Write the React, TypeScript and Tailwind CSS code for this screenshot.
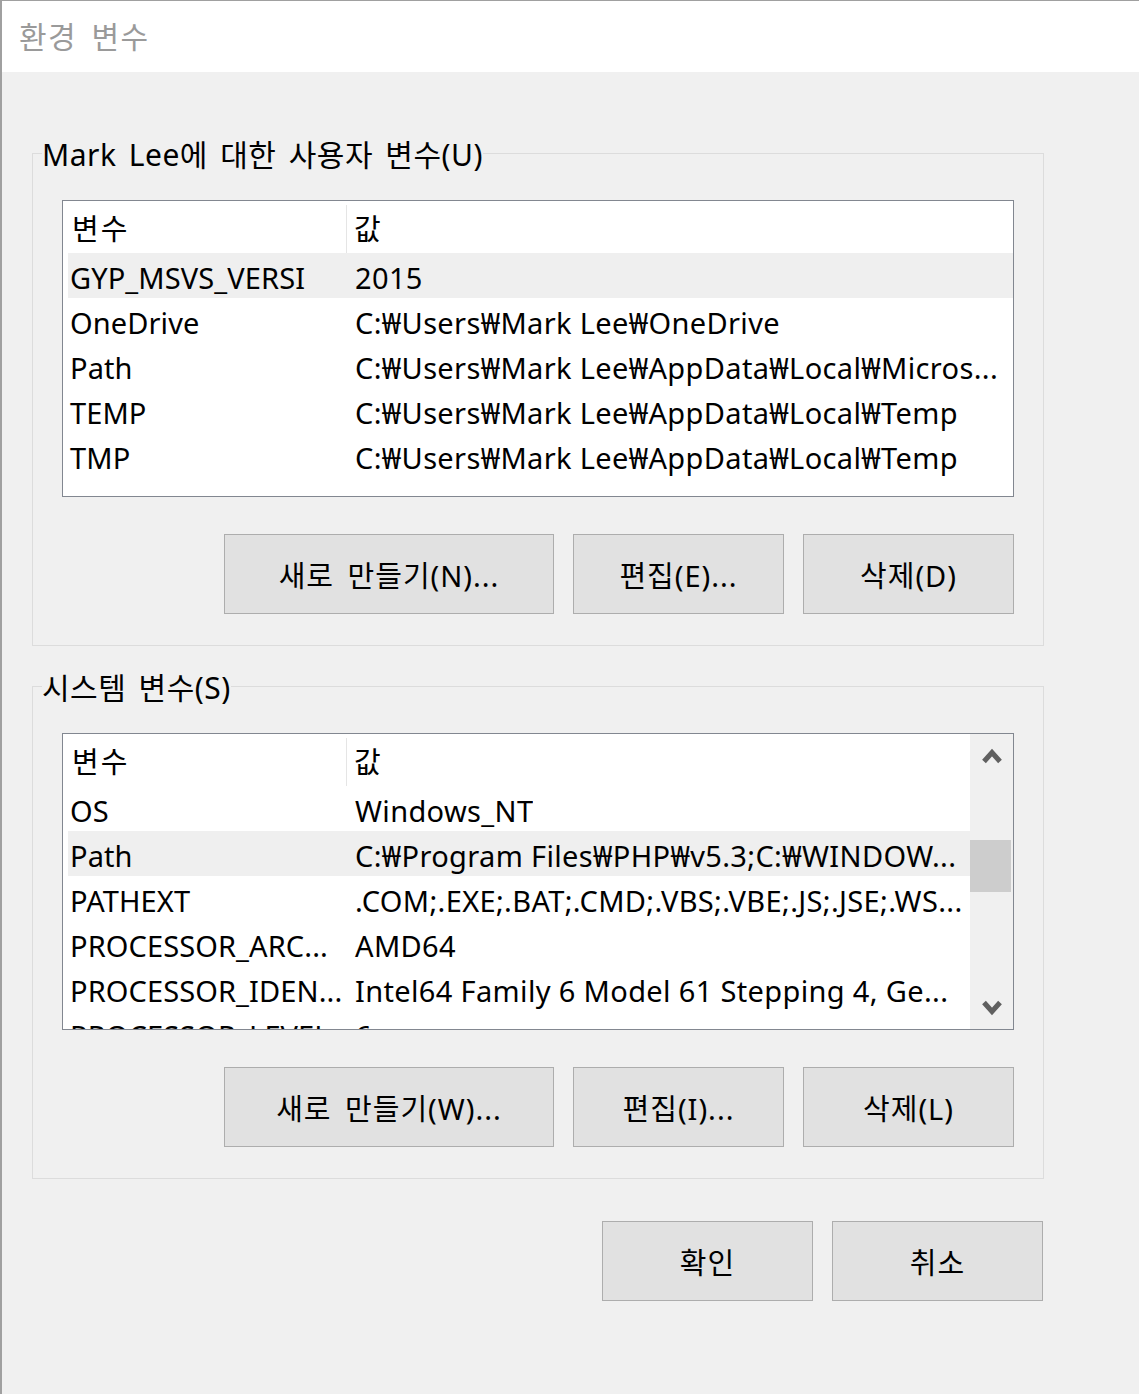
import React from 'react';

type Row = { name: string; value: string };

const userRows: Row[] = [
  { name: 'GYP_MSVS_VERSI', value: '2015' },
  { name: 'OneDrive', value: 'C:₩Users₩Mark Lee₩OneDrive' },
  { name: 'Path', value: 'C:₩Users₩Mark Lee₩AppData₩Local₩Micros...' },
  { name: 'TEMP', value: 'C:₩Users₩Mark Lee₩AppData₩Local₩Temp' },
  { name: 'TMP', value: 'C:₩Users₩Mark Lee₩AppData₩Local₩Temp' },
];

const systemRows: Row[] = [
  { name: 'OS', value: 'Windows_NT' },
  { name: 'Path', value: 'C:₩Program Files₩PHP₩v5.3;C:₩WINDOW...' },
  { name: 'PATHEXT', value: '.COM;.EXE;.BAT;.CMD;.VBS;.VBE;.JS;.JSE;.WS...' },
  { name: 'PROCESSOR_ARC...', value: 'AMD64' },
  { name: 'PROCESSOR_IDEN...', value: 'Intel64 Family 6 Model 61 Stepping 4, Ge...' },
  { name: 'PROCESSOR_LEVEL', value: '6' },
];

function Chevron({ down }: { down?: boolean }) {
  return (
    <svg width="20" height="18" viewBox="0 0 20 18" className={down ? 'rotate-180' : ''}>
      <polyline points="2,14.5 10,5.5 18,14.5" fill="none" stroke="#606060" strokeWidth="5" strokeLinejoin="miter" />
    </svg>
  );
}

function VarList({ rows, selected, scroll }: { rows: Row[]; selected: number; scroll?: boolean }) {
  return (
    <div className="flex h-[297px] w-[952px] overflow-hidden border border-[#828790] bg-white">
      <div className="flex min-w-0 flex-1 flex-col">
        {/* header */}
        <div className="flex h-[52px] shrink-0 items-center pt-[4px] text-[29px] tracking-[2px]">
          <div className="flex h-full w-[284px] items-center border-r border-[#e5e5e5] pl-[9px]">변수</div>
          <div className="flex h-full flex-1 items-center pl-[7px]">값</div>
        </div>
        {rows.map((r, i) => (
          <div
            key={r.name}
            className={`ml-[5px] flex h-[45px] shrink-0 items-center whitespace-nowrap pt-[4px] text-[29px] leading-[40px] ${
              i === selected ? 'bg-[#efefef]' : ''
            }`}
          >
            <div className="w-[279px] shrink-0 overflow-hidden pl-[2px] tracking-[0.1px]">{r.name}</div>
            <div className="overflow-hidden pl-[8px] tracking-[0.35px]">{r.value}</div>
          </div>
        ))}
      </div>
      {scroll && (
        <div className="flex w-[43px] shrink-0 flex-col bg-[#f0f0f0]">
          <div className="flex h-[43px] items-center justify-center">
            <Chevron />
          </div>
          <div className="mt-[63px] h-[52px] w-[41px] bg-[#cdcdcd]" />
          <div className="flex-1" />
          <div className="flex h-[43px] items-center justify-center">
            <Chevron down />
          </div>
        </div>
      )}
    </div>
  );
}

function Btn({ label, w }: { label: string; w: string }) {
  return (
    <button
      type="button"
      className={`${w} h-[80px] border border-[#adadad] bg-[#e1e1e1] pt-[4px] text-[29px] tracking-[1px] text-black [word-spacing:5px]`}
    >
      {label}
    </button>
  );
}

function Group({
  title,
  rows,
  selected,
  scroll,
  buttons,
  className,
}: {
  title: string;
  rows: Row[];
  selected: number;
  scroll?: boolean;
  buttons: string[];
  className: string;
}) {
  return (
    <fieldset className={`${className} w-[1012px] border border-[#dcdcdc] pl-[9px] pr-[29px] pt-[25px] pb-[31px]`}>
      <legend className="pt-[3px] text-[30px] leading-[40px] tracking-[0.5px] text-black [word-spacing:4px]">{title}</legend>
      <div className="ml-[20px]">
        <VarList rows={rows} selected={selected} scroll={scroll} />
        <div className="mt-[37px] flex justify-end gap-[19px]">
          <Btn label={buttons[0]} w="w-[330px]" />
          <Btn label={buttons[1]} w="w-[211px]" />
          <Btn label={buttons[2]} w="w-[211px]" />
        </div>
      </div>
    </fieldset>
  );
}

export default function App() {
  return (
    <div className="h-[1394px] w-[1139px] overflow-hidden border-t border-l-2 border-[#a0a0a0] bg-[#f0f0f0] font-['Noto_Sans','Noto_Sans_CJK_KR',sans-serif] text-black">
      {/* Title bar */}
      <div className="flex h-[71px] items-center bg-white pl-[17px] text-[30px] tracking-[1.5px] text-[#9a9a9a] [word-spacing:5px]">
        환경 변수
      </div>

      <div className="pl-[30px]">
        <Group
          className="mt-[60px]"
          title="Mark Lee에 대한 사용자 변수(U)"
          rows={userRows}
          selected={0}
          buttons={['새로 만들기(N)...', '편집(E)...', '삭제(D)']}
        />
        <Group
          className="mt-[19px]"
          title="시스템 변수(S)"
          rows={systemRows}
          selected={1}
          scroll
          buttons={['새로 만들기(W)...', '편집(I)...', '삭제(L)']}
        />
        <div className="mt-[42px] flex w-[1012px] justify-end gap-[19px] pr-[1px]">
          <Btn label="확인" w="w-[211px]" />
          <Btn label="취소" w="w-[211px]" />
        </div>
      </div>
    </div>
  );
}
